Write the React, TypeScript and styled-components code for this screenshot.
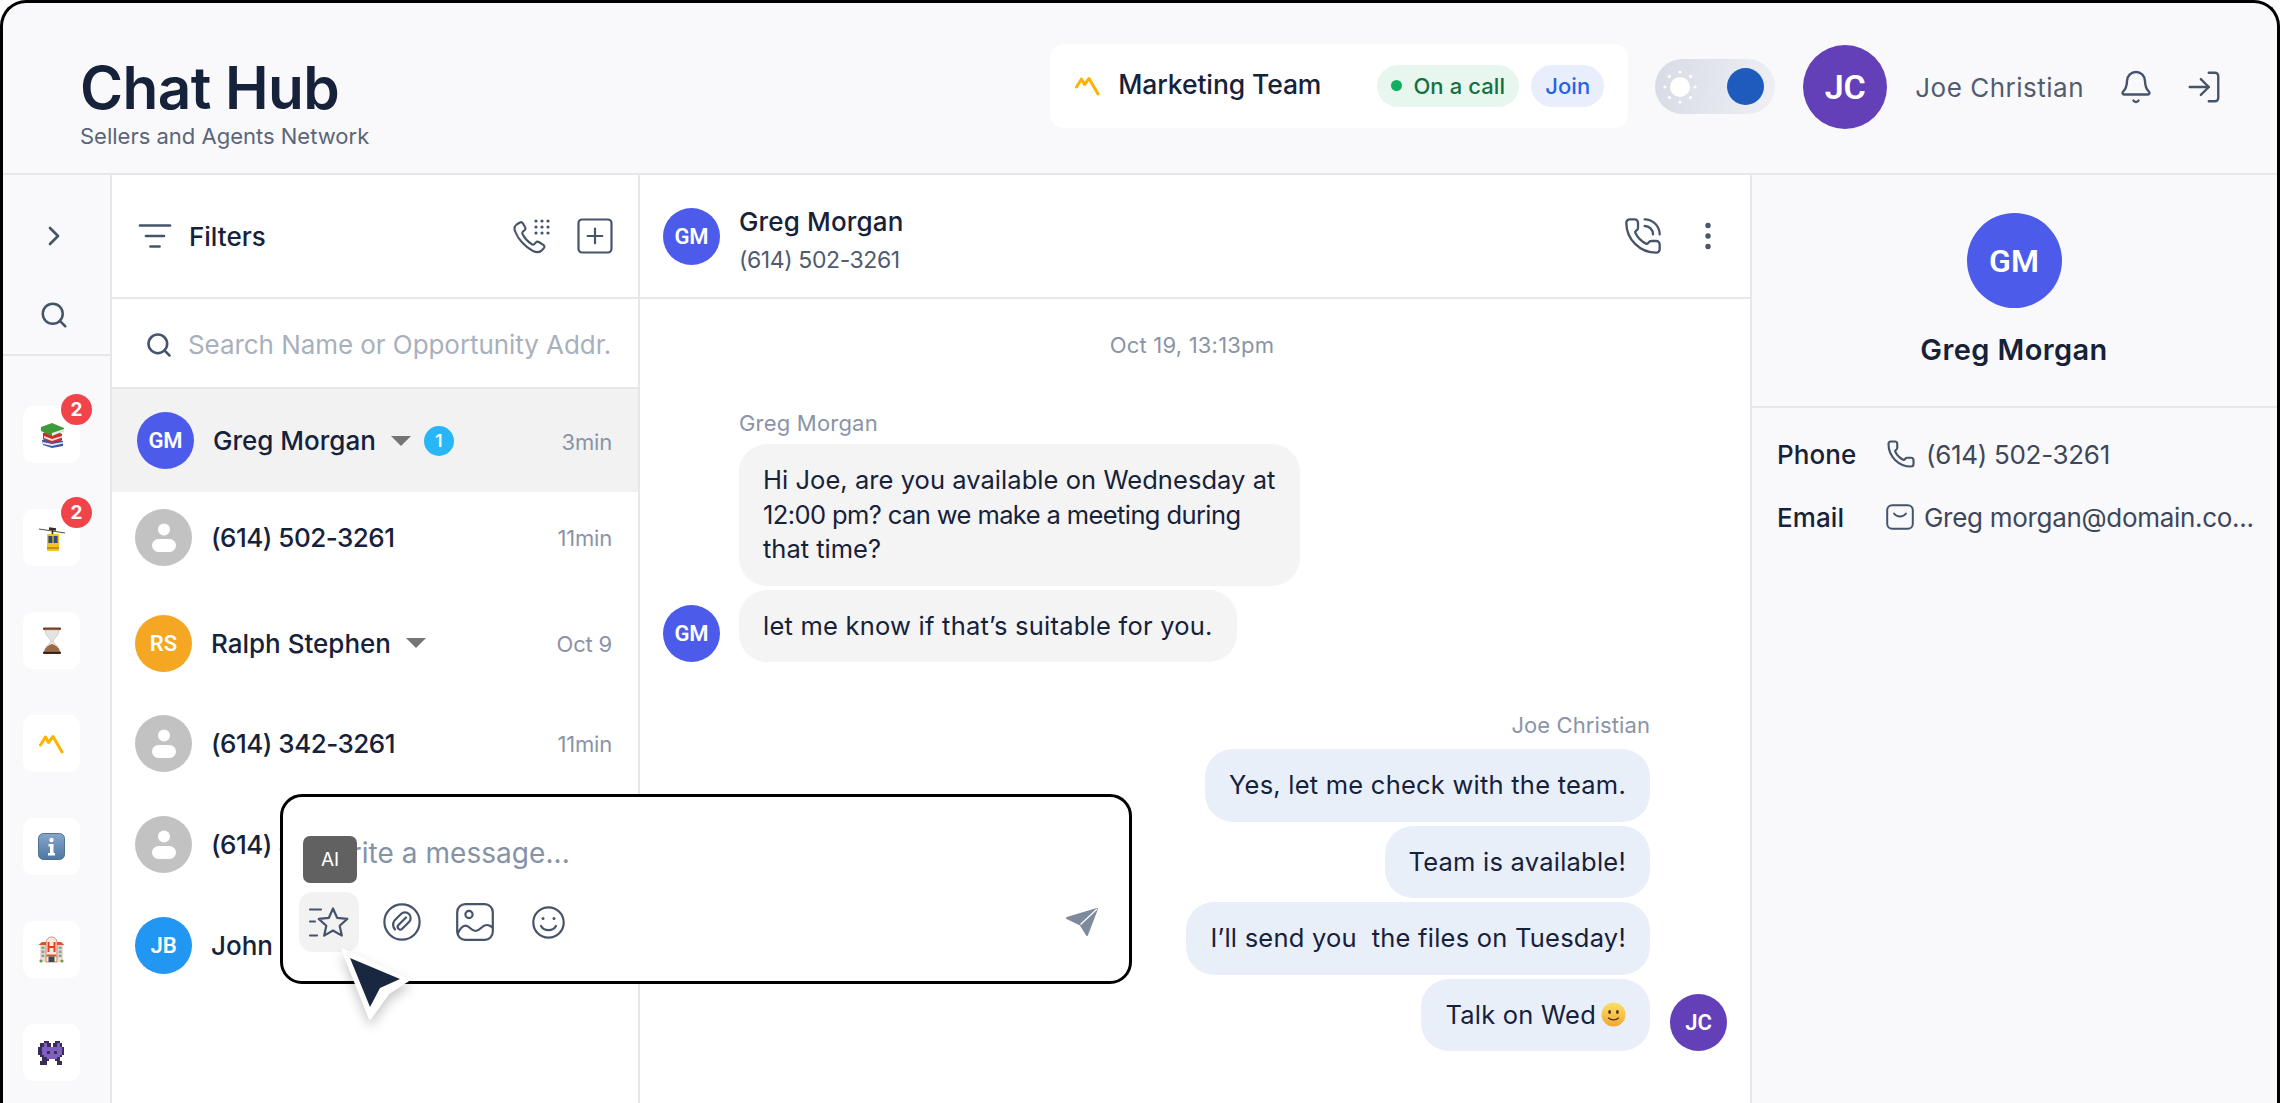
import React from 'react';
import styled, { createGlobalStyle } from 'styled-components';
import { Bell, ChevronRight, EllipsisVertical, ListFilter, LogIn, Phone, PhoneCall, Search, SquarePlus } from 'lucide-react';

const ink = '#16213a';
const slate = '#46546b';
const muted = '#8a94a6';
const line = '#e6e7ea';

const GlobalStyle = createGlobalStyle`
	* { box-sizing: border-box; }
	html, body { margin: 0; background: #fff; }
	body { font-family: Inter, "Noto Sans", sans-serif; color: ${ink}; }
`;

const Frame = styled.div`
	position: relative;
	width: 2280px;
	height: 1103px;
	overflow: hidden;
	display: flex;
	flex-direction: column;
	border: 3px solid #000;
	border-bottom: 0;
	border-radius: 26px 26px 0 0;
	background: #f9f9fb;
`;

const Header = styled.header`
	flex: none;
	height: 172px;
	display: flex;
	align-items: center;
	padding: 0 54px 2px 77px;
	border-bottom: 2px solid ${line};
`;

const Brand = styled.div`
	flex: 1;
	padding-top: 30px;
`;

const Title = styled.h1`
	margin: 0;
	font-size: 58.5px;
	line-height: 65px;
	font-weight: 600;
	letter-spacing: -0.6px;
	color: ${ink};
`;

const Subtitle = styled.div`
	margin-top: 2px;
	font-size: 22px;
	line-height: 28px;
	color: #5a6578;
	letter-spacing: 0;
`;

const TeamCard = styled.div`
	width: 578px;
	height: 84px;
	display: flex;
	align-items: center;
	padding: 0 24px 0 25px;
	border-radius: 14px;
	background: #fff;
	margin: 0 27px 3px 0;
`;

const TeamName = styled.div`
	flex: 1;
	margin-left: 18px;
	margin-top: -3px;
	font-size: 26.5px;
	font-weight: 500;
	letter-spacing: -0.1px;
`;

const Pill = styled.div<{ $bg: string; $color: string }>`
	height: 42px;
	display: flex;
	align-items: center;
	gap: 11px;
	padding: 0 14px;
	border-radius: 21px;
	background: ${p => p.$bg};
	color: ${p => p.$color};
	font-size: 22px;
	font-weight: 500;
	letter-spacing: 0.1px;
	margin-left: 12px;
`;

const Dot = styled.span`
	width: 11px;
	height: 11px;
	border-radius: 50%;
	background: #12ae62;
`;

const Toggle = styled.div`
	width: 120px;
	height: 55px;
	display: flex;
	align-items: center;
	justify-content: space-between;
	padding: 0 11px 0 8px;
	border-radius: 28px;
	background: linear-gradient(100deg, #d8dbe5, #eef0f4);
	margin: 0 28px 1px 0;
`;

const Knob = styled.span`
	width: 37px;
	height: 37px;
	border-radius: 50%;
	background: #1e5bbd;
`;

const Avatar = styled.div<{ $size: number; $bg: string; $font?: number }>`
	flex: none;
	width: ${p => p.$size}px;
	height: ${p => p.$size}px;
	display: flex;
	align-items: center;
	justify-content: center;
	border-radius: 50%;
	background: ${p => p.$bg};
	color: #fff;
	font-family: Roboto, Inter, sans-serif;
	font-size: ${p => p.$font ?? 22}px;
	font-weight: 600;
`;

const UserName = styled.div`
	margin: 0 34px 0 28px;
	font-size: 26px;
	font-weight: 400;
	color: #525c6e;
	letter-spacing: 0.5px;
`;

const IconSlot = styled.span<{ $gap?: number }>`
	display: flex;
	flex: none;
	color: ${slate};
	margin-left: ${p => p.$gap ?? 0}px;
`;

const Body = styled.div`
	flex: 1;
	min-height: 0;
	display: grid;
	grid-template-columns: 109px 528px 1112px 1fr;
`;

const Rail = styled.nav`
	border-right: 2px solid ${line};
	display: flex;
	flex-direction: column;
`;

const RailTop = styled.div`
	height: 181px;
	flex: none;
	display: flex;
	flex-direction: column;
	align-items: center;
	padding: 45px 5px 0 0;
	gap: 48px;
	border-bottom: 2px solid ${line};
`;

const TileStack = styled.div`
	display: flex;
	flex-direction: column;
	gap: 46px;
	padding: 50px 0 0 20px;
`;

const Tile = styled.div`
	position: relative;
	width: 57px;
	height: 57px;
	display: flex;
	align-items: center;
	justify-content: center;
	border-radius: 10px;
	background: #fff;
`;

const RedBadge = styled.span`
	position: absolute;
	top: -12px;
	left: 38px;
	width: 31px;
	height: 31px;
	display: flex;
	align-items: center;
	justify-content: center;
	border-radius: 50%;
	background: #f0444a;
	color: #fff;
	font-size: 19px;
	font-weight: 700;
`;

const ListPane = styled.section`
	background: #fff;
	border-right: 2px solid ${line};
	display: flex;
	flex-direction: column;
`;

const FilterBar = styled.div`
	height: 124px;
	flex: none;
	display: flex;
	align-items: center;
	padding: 0 21px 0 25px;
	border-bottom: 2px solid ${line};
`;

const FilterLabel = styled.div`
	flex: 1;
	margin-left: 16px;
	font-size: 26px;
	font-weight: 500;
	letter-spacing: 0;
`;

const SearchBar = styled.div`
	height: 90px;
	flex: none;
	display: flex;
	align-items: center;
	gap: 15px;
	padding: 3px 26px 0 33px;
	border-bottom: 2px solid ${line};
`;

const SearchHint = styled.div`
	font-size: 26px;
	letter-spacing: -0.06px;
	color: #a9b0bd;
	white-space: nowrap;
`;

const Row = styled.div<{ $active?: boolean; $top?: number }>`
	height: ${p => (p.$active ? 103 : 58)}px;
	flex: none;
	display: flex;
	align-items: center;
	margin-top: ${p => p.$top ?? 0}px;
	padding: 0 26px 0 ${p => (p.$active ? 25 : 23)}px;
	background: ${p => (p.$active ? '#f2f2f2' : 'transparent')};
`;

const RowName = styled.div<{ $digits?: boolean }>`
	margin-left: 19px;
	font-size: 26px;
	font-weight: 500;
	letter-spacing: ${p => (p.$digits ? -0.5 : 0)}px;
	white-space: nowrap;
`;

const Caret = styled.span`
	width: 0;
	height: 0;
	margin-left: 15px;
	border-left: 10px solid transparent;
	border-right: 10px solid transparent;
	border-top: 10px solid #757575;
`;

const CountBadge = styled.span`
	width: 30px;
	height: 30px;
	margin-left: 13px;
	display: flex;
	align-items: center;
	justify-content: center;
	border-radius: 50%;
	background: #29b6f6;
	color: #fff;
	font-size: 17px;
	font-weight: 600;
`;

const RowTime = styled.div`
	margin: 2px 0 0 auto;
	font-size: 22px;
	color: ${muted};
	letter-spacing: -0.2px;
`;

const ChatPane = styled.main`
	background: #fff;
	border-right: 2px solid ${line};
	display: flex;
	flex-direction: column;
`;

const ChatHead = styled.div`
	height: 124px;
	flex: none;
	display: flex;
	align-items: center;
	padding: 0 24px 0 23px;
	border-bottom: 2px solid ${line};
`;

const HeadText = styled.div`
	flex: 1;
	margin: 9px 0 0 19px;
`;

const HeadName = styled.div`
	font-size: 26px;
	line-height: 39px;
	font-weight: 500;
	letter-spacing: 0.15px;
`;

const HeadPhone = styled.div`
	font-size: 23px;
	line-height: 39px;
	color: #505b6e;
	letter-spacing: -0.4px;
`;

const Thread = styled.div`
	flex: 1;
	padding: 31px 23px 0;
	display: flex;
	flex-direction: column;
`;

const DateLine = styled.div`
	height: 30px;
	line-height: 30px;
	text-align: center;
	padding-right: 6px;
	font-size: 22px;
	color: ${muted};
	letter-spacing: 0.2px;
`;

const Group = styled.div<{ $mine?: boolean; $top: number }>`
	display: flex;
	align-items: flex-end;
	justify-content: ${p => (p.$mine ? 'flex-end' : 'flex-start')};
	gap: ${p => (p.$mine ? 20 : 19)}px;
	margin-top: ${p => p.$top}px;
`;

const Stack = styled.div<{ $mine?: boolean }>`
	display: flex;
	flex-direction: column;
	gap: 4px;
	align-items: ${p => (p.$mine ? 'flex-end' : 'flex-start')};
`;

const Sender = styled.div<{ $mine?: boolean }>`
	height: 26px;
	line-height: 26px;
	margin-bottom: ${p => (p.$mine ? 7 : 4)}px;
	font-size: 22px;
	color: ${muted};
	letter-spacing: ${p => (p.$mine ? 0.1 : 0.2)}px;
`;

const Bubble = styled.div<{ $mine?: boolean; $wide?: boolean }>`
	min-width: ${p => (p.$wide ? 561 : 0)}px;
	padding: 19px 24px;
	border-radius: 28px;
	background: ${p => (p.$mine ? '#e9eff9' : '#f4f4f4')};
	font-size: 25.5px;
	line-height: 34.5px;
	letter-spacing: 0.23px;
	display: flex;
	flex-direction: ${p => (p.$wide ? 'column' : 'row')};
	align-items: ${p => (p.$wide ? 'flex-start' : 'center')};
	gap: ${p => (p.$wide ? 0 : 5)}px;
`;

const BubbleLine = styled.span<{ $spacing: number }>`
	letter-spacing: ${p => p.$spacing}px;
	white-space: nowrap;
`;

const InfoPane = styled.aside`
	display: flex;
	flex-direction: column;
`;

const InfoHead = styled.div`
	height: 233px;
	flex: none;
	display: flex;
	flex-direction: column;
	align-items: center;
	padding-top: 38px;
	padding-right: 1px;
	border-bottom: 2px solid ${line};
`;

const InfoName = styled.div`
	margin-top: 24px;
	font-size: 29px;
	font-weight: 600;
	letter-spacing: 0.4px;
`;

const InfoRows = styled.div`
	display: flex;
	flex-direction: column;
	gap: 23px;
	padding: 26px 0 0 25px;
`;

const InfoRow = styled.div`
	height: 40px;
	display: flex;
	align-items: center;
`;

const InfoLabel = styled.div`
	width: 109px;
	font-size: 26px;
	font-weight: 500;
	letter-spacing: 0.1px;
`;

const InfoValue = styled.div<{ $gap: number }>`
	margin-left: ${p => p.$gap}px;
	font-size: 26px;
	color: #3d4759;
	letter-spacing: -0.3px;
	white-space: nowrap;
`;

const Composer = styled.div`
	position: absolute;
	left: 277px;
	top: 791px;
	width: 852px;
	height: 190px;
	display: flex;
	flex-direction: column;
	border: 3px solid #000;
	border-radius: 22px;
	background: #fff;
`;

const ComposerInput = styled.div`
	height: 95px;
	flex: none;
	display: flex;
	align-items: center;
	padding: 16px 0 0 41px;
	font-size: 28px;
	letter-spacing: 0.05px;
	color: #8592a6;
`;

const ComposerTools = styled.div`
	display: flex;
	align-items: center;
	gap: 13px;
	padding: 0 17px 0 16px;
`;

const ToolButton = styled.div<{ $active?: boolean; $end?: boolean }>`
	width: 60px;
	height: 60px;
	display: flex;
	align-items: center;
	justify-content: center;
	border-radius: 14px;
	background: ${p => (p.$active ? '#f2f2f2' : 'transparent')};
	margin-left: ${p => (p.$end ? 'auto' : 0)};
`;

const Tooltip = styled.div`
	position: absolute;
	left: 20px;
	top: 39px;
	width: 54px;
	height: 47px;
	display: flex;
	align-items: center;
	justify-content: center;
	border-radius: 7px;
	background: #616161;
	color: #fff;
	font-size: 19px;
`;

const Pointer = styled.svg`
	position: absolute;
	left: 52px;
	top: 148px;
	width: 80px;
	height: 80px;
	filter: drop-shadow(0 6px 6px rgba(0, 0, 0, 0.22));
`;

const MarkLogo = ({ size = 25 }: { size?: number }) => (
	<svg width={size} height={size * 0.8} viewBox="0 0 25 20" fill="none">
		<path d="M1.5 11 L6.5 3 L9.5 8.5 L14 2.5 L23 18" stroke="#ffb300" strokeWidth="3" strokeLinejoin="round" strokeLinecap="round" />
	</svg>
);

const Sun = () => (
	<svg width="34" height="34" viewBox="0 0 34 34" fill="#fff">
		<circle cx="17" cy="17" r="10" />
		{[0, 45, 90, 135, 180, 225, 270, 315].map(a => (
			<circle key={a} cx={17 + 15 * Math.cos((a * Math.PI) / 180)} cy={17 + 15 * Math.sin((a * Math.PI) / 180)} r="1.6" />
		))}
	</svg>
);

const Books = () => (
	<svg width="28" height="28" viewBox="0 0 28 28">
		<path d="M4 19 L14 16 L25 20 L25 25 L14 27 L5 24Z" fill="#3c55a5" />
		<path d="M5 21 L14 23 L25 21 L25 22.5 L14 25 L5 23Z" fill="#e8e8ee" />
		<path d="M5 12 L15 9 L24 13 L24 19 L14 22 L5 18Z" fill="#c9302c" />
		<path d="M6 15 L14 18 L24 15 L24 16.5 L14 20 L6 17Z" fill="#f1e6e0" />
		<path d="M3 6 L14 2 L26 7 L26 10 L14 15 L3 10Z" fill="#3f9a3c" />
		<path d="M14 12 L26 8 L26 10 L14 15Z" fill="#e7eee5" />
	</svg>
);

const Tramway = () => (
	<svg width="28" height="28" viewBox="0 0 28 28">
		<path d="M1 5 L27 9" stroke="#55504a" strokeWidth="1.2" />
		<path d="M11 4.5 L18 5.5" stroke="#2f2c2a" strokeWidth="2.4" />
		<path d="M14.5 6 V10" stroke="#2f2c2a" strokeWidth="1.6" />
		<rect x="9" y="10" width="12" height="17" rx="1" fill="#f2c21f" />
		<rect x="10.4" y="12" width="4" height="7" fill="#2f4b86" />
		<rect x="15.6" y="12" width="4" height="7" fill="#2f4b86" />
		<rect x="9" y="23" width="12" height="2" fill="#c78e11" />
	</svg>
);

const Hourglass = () => (
	<svg width="22" height="28" viewBox="0 0 22 28">
		<rect x="2" y="0.5" width="18" height="2.6" rx="1" fill="#7a3f1e" />
		<path d="M4 3 H18 C18 9 13 11 12 14 C13 17 18 19 18 25 H4 C4 19 9 17 10 14 C9 11 4 9 4 3Z" fill="#e6e4e2" stroke="#b9b6b4" strokeWidth="0.6" />
		<path d="M3 24.5 C4 20 8 18 11 17 C14 18 18 20 19 24.5Z" fill="#9d6a45" />
		<rect x="2" y="24.5" width="18" height="2.6" rx="1" fill="#3d2416" />
	</svg>
);

const InfoSign = () => (
	<svg width="27" height="27" viewBox="0 0 27 27">
		<defs>
			<linearGradient id="infoFill" x1="0" y1="0" x2="0" y2="1">
				<stop offset="0" stopColor="#86a7ca" />
				<stop offset="1" stopColor="#4c76a3" />
			</linearGradient>
		</defs>
		<rect x="0.5" y="0.5" width="26" height="26" rx="5" fill="url(#infoFill)" stroke="#54718f" />
		<circle cx="13.5" cy="7" r="2.2" fill="#fff" />
		<path d="M10.5 11 H15.5 V20 H17 V22.5 H10 V20 H12 V13.5 H10.5Z" fill="#fff" />
	</svg>
);

const Hotel = () => (
	<svg width="27" height="27" viewBox="0 0 27 27">
		<rect x="2" y="8" width="23" height="18" fill="#ecdfcf" />
		<path d="M0.5 9 L4 6 H23 L26.5 9Z" fill="#d9532c" />
		<path d="M8 26 V7 C8 3 11 1 13.5 1 C16 1 19 3 19 7 V26Z" fill="#f5ebde" stroke="#d9532c" strokeWidth="0.7" />
		<path d="M10.5 6 V16 M16.5 6 V16 M10.5 11 H16.5" stroke="#e2431e" strokeWidth="2" />
		<path d="M8 20.5 H19 L18 18.5 H9Z" fill="#d9532c" />
		<rect x="10.5" y="20.5" width="6" height="5.5" fill="#33505a" />
		{[3.4, 20.6].map(x => [10.5, 14.5, 18.5].map(y => <rect key={`${x}-${y}`} x={x} y={y} width="3" height="2.6" fill="#8aa0a8" />))}
		<circle cx="3" cy="25" r="1.6" fill="#6f9a4a" />
		<circle cx="24" cy="25" r="1.6" fill="#6f9a4a" />
	</svg>
);

const Invader = () => (
	<svg width="28" height="24" viewBox="0 0 13 12" shapeRendering="crispEdges" preserveAspectRatio="none">
		<path
			d="M3 0h2v1h1v2h1V1h1V0h2v1h1v2h1v4h-1v1h-1v2h1v2H9v-2H8V9H5v1H4v2H1v-2h1V8H1V7H0V3h1V1h2z"
			fill="#3a2c58"
		/>
		<path d="M3 1h1v2h5V1h1v2h1v4h-1v1H9v1H4V8H3V7H2V3h1z" fill="#7f60c0" />
		<rect x="4" y="5" width="1.6" height="1.6" fill="#3a2c58" />
		<rect x="7.4" y="5" width="1.6" height="1.6" fill="#3a2c58" />
	</svg>
);

const Person = () => (
	<svg width="32" height="32" viewBox="0 0 32 32" fill="#fff">
		<circle cx="16" cy="8.5" r="6" />
		<rect x="4" y="18" width="24" height="13" rx="6.5" />
	</svg>
);

const DialPhone = () => (
	<svg width="37" height="35" viewBox="0 0 37 35" fill="none" stroke={slate} strokeWidth="2.1" strokeLinecap="round" strokeLinejoin="round">
		<path d="M7 3.5 L3.6 5.5 C1.4 7 1 9.5 2.2 12.5 C5 20 12 28 20 32 C23.5 33.6 27 33.5 29.2 31 L31 28.8 C31.8 27.6 31.5 26.6 30.3 25.8 L25.8 23 C24.6 22.3 23.6 22.5 22.7 23.6 L21.4 25 C20.6 25.8 19.6 25.9 18.6 25.2 C15 22.8 11.5 19 9.6 15.3 C9 14.1 9.2 13.2 10 12.5 L11.6 11.2 C12.6 10.3 12.7 9.2 12 8.1 L9.8 4.2 C9.1 3.1 8.1 2.8 7 3.5Z" />
		{[23, 29, 35].map(x => [2, 8, 14].map(y => <circle key={`${x}-${y}`} cx={x} cy={y} r="1.6" fill={slate} stroke="none" />))}
	</svg>
);

const MailBox = () => (
	<svg width="28" height="26" viewBox="0 0 28 26" fill="none" stroke={slate} strokeWidth="2" strokeLinecap="round" strokeLinejoin="round">
		<rect x="1.2" y="1.2" width="25.6" height="23.6" rx="5" />
		<path d="M8 9.5 C11 13.5 17 13.5 20 9.5" />
	</svg>
);

const StarLines = () => (
	<svg width="42" height="33" viewBox="0 0 42 32" fill="none" stroke={slate} strokeWidth="2.2" strokeLinecap="round" strokeLinejoin="round">
		<path d="M2 3 H13 M2 15 H7 M2 29 H9" />
		<path d="M25 2 L29.1 11.3 L39.3 12.4 L31.7 19.2 L33.8 29.1 L25 24 L16.2 29.1 L18.3 19.2 L10.7 12.4 L20.9 11.3Z" />
	</svg>
);

const ClipCircle = () => (
	<svg width="38" height="38" viewBox="0 0 38 38" fill="none" stroke={slate} strokeWidth="2.2" strokeLinecap="round" strokeLinejoin="round">
		<circle cx="19" cy="19" r="17.6" />
		<path d="M23 14.5 L15.5 22 A2.6 2.6 0 0 0 19.2 25.7 L26 19 A5.6 5.6 0 0 0 18 11 L11.5 17.5 C9.5 20.5 10 24 12 26.5" />
	</svg>
);

const Picture = () => (
	<svg width="38" height="38" viewBox="0 0 38 38" fill="none" stroke={slate} strokeWidth="2.2" strokeLinecap="round" strokeLinejoin="round">
		<rect x="1.2" y="1.2" width="35.6" height="35.6" rx="8" />
		<circle cx="13" cy="11.5" r="3.6" />
		<path d="M2 30 C6 22 10 21 14 25 C18 29 21 29 25 25 C29 21 32 21 36 24" />
	</svg>
);

const Face = () => (
	<svg width="33" height="33" viewBox="0 0 33 33" fill="none" stroke={slate} strokeWidth="2.2" strokeLinecap="round">
		<circle cx="16.5" cy="16.5" r="15.2" />
		<circle cx="11" cy="12.5" r="1.5" fill={slate} stroke="none" />
		<circle cx="22" cy="12.5" r="1.5" fill={slate} stroke="none" />
		<path d="M9 20 C12 25.5 21 25.5 24 20" />
	</svg>
);

const SendPlane = () => (
	<svg width="34" height="30" viewBox="0 0 34 30">
		<path d="M32 2 L22 28 L15.5 17.5 L2 11Z" fill="#7d8a9c" stroke="#7d8a9c" strokeWidth="2" strokeLinejoin="round" />
		<path d="M32 2 L15.5 17.5" stroke="#fff" strokeWidth="1.2" />
	</svg>
);

const Smiley = () => (
	<svg width="25" height="25" viewBox="0 0 25 25">
		<defs>
			<linearGradient id="smileFill" x1="0" y1="0" x2="0" y2="1">
				<stop offset="0" stopColor="#fbe06a" />
				<stop offset="1" stopColor="#f3a72e" />
			</linearGradient>
		</defs>
		<circle cx="12.5" cy="12.5" r="12" fill="url(#smileFill)" />
		<ellipse cx="8.6" cy="10" rx="1.4" ry="2" fill="#4a3413" />
		<ellipse cx="16.4" cy="10" rx="1.4" ry="2" fill="#4a3413" />
		<path d="M7.5 16 C10 18.6 15 18.6 17.5 16" stroke="#4a3413" strokeWidth="1.2" fill="none" strokeLinecap="round" />
	</svg>
);

const tiles = [
	{ icon: <Books />, badge: 2 },
	{ icon: <Tramway />, badge: 2 },
	{ icon: <Hourglass /> },
	{ icon: <MarkLogo /> },
	{ icon: <InfoSign /> },
	{ icon: <Hotel /> },
	{ icon: <Invader /> },
];

export default function App() {
	return (
		<>
			<GlobalStyle />
			<Frame>
				<Header>
					<Brand>
						<Title>Chat Hub</Title>
						<Subtitle>Sellers and Agents Network</Subtitle>
					</Brand>
					<TeamCard>
						<MarkLogo />
						<TeamName>Marketing Team</TeamName>
						<Pill $bg="#e7f6ee" $color="#14703f">
							<Dot />
							On a call
						</Pill>
						<Pill $bg="#e8eefb" $color="#2563eb">Join</Pill>
					</TeamCard>
					<Toggle>
						<Sun />
						<Knob />
					</Toggle>
					<Avatar $size={84} $bg="#6340b8" $font={34}>JC</Avatar>
					<UserName>Joe Christian</UserName>
					<IconSlot><Bell size={36} strokeWidth={1.6} /></IconSlot>
					<IconSlot $gap={31}><LogIn size={38} strokeWidth={1.5} /></IconSlot>
				</Header>
				<Body>
					<Rail>
						<RailTop>
							<IconSlot><ChevronRight size={32} strokeWidth={2} /></IconSlot>
							<IconSlot><Search size={30} strokeWidth={2} /></IconSlot>
						</RailTop>
						<TileStack>
							{tiles.map((t, i) => (
								<Tile key={i}>
									{t.icon}
									{t.badge && <RedBadge>{t.badge}</RedBadge>}
								</Tile>
							))}
						</TileStack>
					</Rail>
					<ListPane>
						<FilterBar>
							<IconSlot><ListFilter size={36} strokeWidth={1.8} /></IconSlot>
							<FilterLabel>Filters</FilterLabel>
							<IconSlot><DialPhone /></IconSlot>
							<IconSlot $gap={23}><SquarePlus size={44} strokeWidth={1.2} /></IconSlot>
						</FilterBar>
						<SearchBar>
							<IconSlot><Search size={28} strokeWidth={2.2} /></IconSlot>
							<SearchHint>Search Name or Opportunity Addr.</SearchHint>
						</SearchBar>
						<Row $active>
							<Avatar $size={57} $bg="#4c5bea">GM</Avatar>
							<RowName>Greg Morgan</RowName>
							<Caret />
							<CountBadge>1</CountBadge>
							<RowTime>3min</RowTime>
						</Row>
						<Row $top={16}>
							<Avatar $size={57} $bg="#c2c2c2"><Person /></Avatar>
							<RowName $digits>(614) 502-3261</RowName>
							<RowTime>11min</RowTime>
						</Row>
						<Row $top={48}>
							<Avatar $size={57} $bg="#f5a623">RS</Avatar>
							<RowName>Ralph Stephen</RowName>
							<Caret />
							<RowTime>Oct 9</RowTime>
						</Row>
						<Row $top={42}>
							<Avatar $size={57} $bg="#c2c2c2"><Person /></Avatar>
							<RowName $digits>(614) 342-3261</RowName>
							<RowTime>11min</RowTime>
						</Row>
						<Row $top={43}>
							<Avatar $size={57} $bg="#c2c2c2"><Person /></Avatar>
							<RowName $digits>(614) 342-3261</RowName>
						</Row>
						<Row $top={43}>
							<Avatar $size={57} $bg="#2196f3">JB</Avatar>
							<RowName>John Bennett</RowName>
						</Row>
					</ListPane>
					<ChatPane>
						<ChatHead>
							<Avatar $size={57} $bg="#4c5bea">GM</Avatar>
							<HeadText>
								<HeadName>Greg Morgan</HeadName>
								<HeadPhone>(614) 502-3261</HeadPhone>
							</HeadText>
							<IconSlot><PhoneCall size={40} strokeWidth={1.4} /></IconSlot>
							<IconSlot $gap={27}><EllipsisVertical size={36} strokeWidth={1.6} /></IconSlot>
						</ChatHead>
						<Thread>
							<DateLine>Oct 19, 13:13pm</DateLine>
							<Group $top={50}>
								<Avatar $size={57} $bg="#4c5bea">GM</Avatar>
								<Stack>
									<Sender>Greg Morgan</Sender>
									<Bubble $wide>
										<BubbleLine $spacing={0.05}>Hi Joe, are you available on Wednesday at</BubbleLine>
										<BubbleLine $spacing={-0.6}>12:00 pm? can we make a meeting during</BubbleLine>
										<BubbleLine $spacing={0}>that time?</BubbleLine>
									</Bubble>
									<Bubble>let me know if that’s suitable for you.</Bubble>
								</Stack>
							</Group>
							<Group $mine $top={50}>
								<Stack $mine>
									<Sender $mine>Joe Christian</Sender>
									<Bubble $mine>Yes, let me check with the team.</Bubble>
									<Bubble $mine>Team is available!</Bubble>
									<Bubble $mine>I’ll send you&nbsp; the files on Tuesday!</Bubble>
									<Bubble $mine>Talk on Wed <Smiley /></Bubble>
								</Stack>
								<Avatar $size={57} $bg="#6340b8">JC</Avatar>
							</Group>
						</Thread>
					</ChatPane>
					<InfoPane>
						<InfoHead>
							<Avatar $size={95} $bg="#4c5bea" $font={32}>GM</Avatar>
							<InfoName>Greg Morgan</InfoName>
						</InfoHead>
						<InfoRows>
							<InfoRow>
								<InfoLabel>Phone</InfoLabel>
								<IconSlot><Phone size={30} strokeWidth={1.7} /></IconSlot>
								<InfoValue $gap={10}>(614) 502-3261</InfoValue>
							</InfoRow>
							<InfoRow>
								<InfoLabel>Email</InfoLabel>
								<IconSlot><MailBox /></IconSlot>
								<InfoValue $gap={10}>Greg morgan@domain.co...</InfoValue>
							</InfoRow>
						</InfoRows>
					</InfoPane>
				</Body>
				<Composer>
					<ComposerInput>Write a message...</ComposerInput>
					<ComposerTools>
						<ToolButton $active><StarLines /></ToolButton>
						<ToolButton><ClipCircle /></ToolButton>
						<ToolButton><Picture /></ToolButton>
						<ToolButton><Face /></ToolButton>
						<ToolButton $end><SendPlane /></ToolButton>
					</ComposerTools>
					<Tooltip>AI</Tooltip>
					<Pointer viewBox="0 0 80 80">
						<path d="M8 5 L73 35 L53 48 L35 73Z" fill="#fff" stroke="#fff" strokeWidth="3" strokeLinejoin="round" />
						<path d="M15 13 L65 34 L45 43 L35 62Z" fill="#1a2740" />
					</Pointer>
				</Composer>
			</Frame>
		</>
	);
}
